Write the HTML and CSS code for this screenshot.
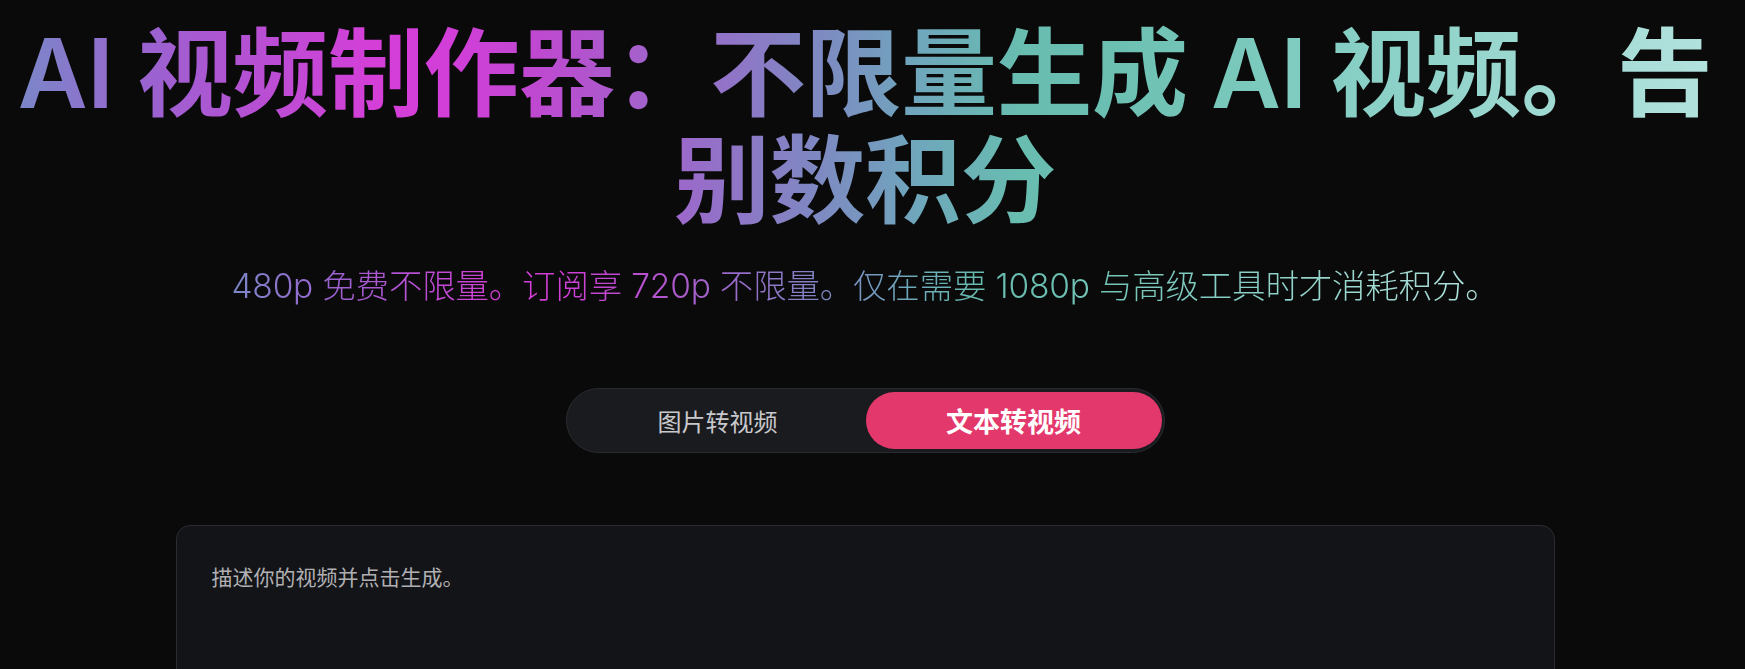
FILE: index.html
```html
<!DOCTYPE html>
<html lang="zh-CN">
<head>
<meta charset="utf-8">
<title>AI 视频制作器</title>
<link rel="stylesheet" href="styles.css">
</head>
<body>
<main class="page">
  <section class="hero">
    <h1 class="title">AI 视频制作器：不限量生成 AI 视频。告别数积分</h1>
    <p class="subtitle">480p 免费不限量。订阅享 720p 不限量。仅在需要 1080p 与高级工具时才消耗积分。</p>
  </section>
  <div class="tabs">
    <button class="tab">图片转视频</button>
    <button class="tab tab-active">文本转视频</button>
  </div>
  <div class="prompt-card">
    <textarea class="prompt" placeholder="描述你的视频并点击生成。"></textarea>
  </div>
</main>
</body>
</html>
```
FILE: styles.css
```css
html, body {
  margin: 0;
  padding: 0;
  background: #0a0a0a;
  overflow: hidden;
}
body {
  font-family: "Inter", "Noto Sans CJK SC", sans-serif;
  color: #e6e6e6;
}
.page {
  width: 1730px;
  display: flex;
  flex-direction: column;
  align-items: center;
  padding-top: 20px;
}
.hero {
  display: flex;
  flex-direction: column;
  align-items: center;
}
.title,
.subtitle {
  background-image: linear-gradient(90deg,
    #7a88c8 0%,
    #9b62d0 8%,
    #b650d3 14%,
    #d43fd8 21%,
    #d13ed8 26%,
    #bd4ad0 31%,
    #9470c8 41%,
    #7f88c2 47%,
    #6fa6bc 53%,
    #68bcb0 59%,
    #6cc0b2 65%,
    #7ac8bc 72%,
    #8ad0c6 80%,
    #b3e2dd 100%);
  -webkit-background-clip: text;
  background-clip: text;
  color: transparent;
  -webkit-text-fill-color: transparent;
  text-align: center;
}
.title {
  margin: 0;
  max-width: 1700px;
  font-family: "Inter", "Noto Sans CJK SC", sans-serif;
  font-size: 96px;
  font-weight: 600;
  line-height: 107px;
  letter-spacing: -0.5px;
}
.subtitle {
  margin: 30px 0 0;
  font-size: 33.5px;
  font-weight: 300;
  line-height: 44px;
  letter-spacing: -0.2px;
}
.tabs {
  margin-top: 80px;
  width: 599px;
  height: 65px;
  box-sizing: border-box;
  padding: 3px 2px 3px 3px;
  display: grid;
  grid-template-columns: 1fr 1fr;
  background: #1a1b1f;
  border: 1px solid #2a2b30;
  border-radius: 33px;
}
.tab {
  border: 0;
  background: transparent;
  border-radius: 30px;
  font-family: "Noto Sans CJK SC", sans-serif;
  font-size: 24px;
  font-weight: 400;
  color: #c9c9cc;
  padding: 0;
  cursor: pointer;
}
.tab-active {
  background: #e2386b;
  color: #ffffff;
  font-size: 27px;
  font-weight: 700;
}
.prompt-card {
  margin-top: 72px;
  width: 1379px;
  height: 260px;
  box-sizing: border-box;
  background: #131418;
  border: 1px solid #2b2c31;
  border-radius: 14px;
  padding: 36px 35px 32px;
  display: flex;
}
.prompt {
  flex: 1;
  background: transparent;
  border: 0;
  outline: none;
  resize: none;
  font-family: "Noto Sans CJK SC", sans-serif;
  font-size: 21px;
  font-weight: 400;
  line-height: 28px;
  color: #d0d0d0;
  padding: 0;
}
.prompt::placeholder {
  color: #b0b0b2;
}
```
